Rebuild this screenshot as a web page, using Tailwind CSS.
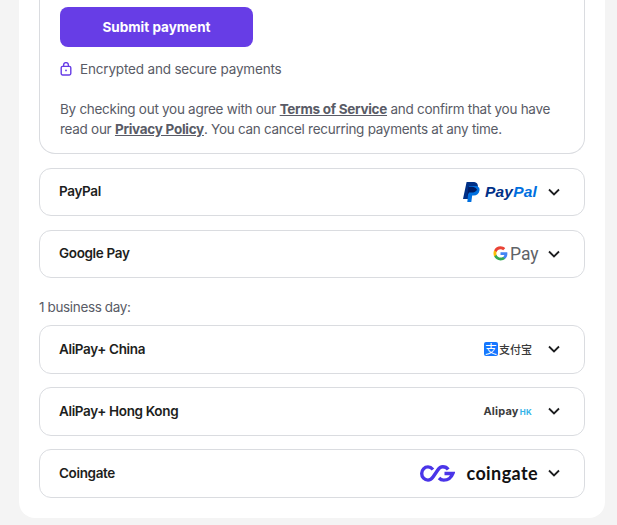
<!DOCTYPE html>
<html lang="en">
<head>
  <meta charset="UTF-8" />
  <title>Payment methods</title>
  <script src="https://cdn.jsdelivr.net/npm/@tailwindcss/browser@4"></script>
</head>
<body class="bg-[#f4f4f4] h-[525px] overflow-hidden font-['Inter',sans-serif] text-[#2f1c6a]">

  <!-- Main card -->
  <div class="ml-[19px] w-[586px] h-[518px] bg-white rounded-b-[16px] px-5 overflow-hidden">

    <!-- Card payment, expanded -->
    <div class="h-[154px] border border-t-0 border-[#dadce0] rounded-b-[16px] pl-5 pr-5 pt-[7px]">
      <button class="w-[193px] h-10 bg-[#673de6] rounded-lg text-white text-[13.5px] font-bold">Submit payment</button>
      <div class="flex items-center mt-[13px] h-[18px] text-[13.5px] tracking-[-0.17px] text-[#595b66]">
        <svg class="w-3 h-[14px] mr-[8px]" viewBox="0 0 12 14" fill="none" stroke="#673de6" stroke-width="1.4">
          <rect x="1.2" y="4.4" width="9.600" height="8.600" rx="1.4" />
          <path d="M3.600 4.400V3a2.400 2.400 0 0 1 4.800 0v1.400" />
          <circle cx="6" cy="8.400" r="0.900" fill="#673de6" stroke="none" />
        </svg>
        Encrypted and secure payments
      </div>
      <p class="mt-[21px] text-[13.5px] leading-5 tracking-[-0.28px] text-[#595b66] whitespace-nowrap">
        By checking out you agree with our <a href="#" class="font-bold underline">Terms of Service</a> and confirm that you have<br />
        read our <a href="#" class="font-bold underline">Privacy Policy</a>. You can cancel recurring payments at any time.
      </p>
    </div>

    <!-- PayPal -->
    <div class="flex items-center h-12 mt-[14px] pl-[19px] pr-6 pb-[1px] border border-[#dadce0] rounded-[12px]">
      <span class="text-[13.5px] tracking-[-0.35px] font-semibold text-[#1d1e20]">PayPal</span>
      <span class="ml-auto flex items-center">
        <svg class="w-[17px] h-5 mr-[5px]" viewBox="0 0 17 20">
          <path d="M3.600 0h6.200c3.600 0 5.600 1.900 5 5-.7 3.700-3.200 5.600-6.600 5.600H6L4.900 17H0z" fill="#003087" />
          <path d="M6 4h6.300c2.800 0 4.700 1.600 4.200 4.500-.6 3.200-2.800 5-5.700 5H9.200L8.300 20H4.300z" fill="#0070e0" />
          <path d="M6 10.600h2.400c2.400 0 4.500-1 5.700-2.900l-.2-.1C12.900 5.500 11 4.700 9 4.700H5.300L4.400 13.500z" fill="#001c64" />
        </svg>
        <span class="text-[15.5px] leading-5 font-['Liberation_Sans',sans-serif] font-bold italic tracking-[0.2px] text-[#003087]">Pay<span class="text-[#0070e0]">Pal</span></span>
      </span>
      <svg class="w-3 h-2 ml-[11px]" viewBox="0 0 12 8" fill="none" stroke="#1d1e20" stroke-width="1.800"><path d="M1 1.500l5 5 5-5" /></svg>
    </div>

    <!-- Google Pay -->
    <div class="flex items-center h-12 mt-[14px] pl-[19px] pr-6 pb-[1px] border border-[#dadce0] rounded-[12px]">
      <span class="text-[13.5px] tracking-[-0.35px] font-semibold text-[#1d1e20]">Google Pay</span>
      <span class="ml-auto flex items-center">
        <svg class="w-[15px] h-[15px] mr-[2px]" viewBox="0 0 48 48">
          <path fill="#4285f4" d="M46 24.500c0-1.600-.1-3.100-.4-4.500H24v8.500h12.400c-.5 2.900-2.100 5.300-4.500 6.900v5.700h7.300C43.500 36.700 46 31.100 46 24.500z" />
          <path fill="#34a853" d="M24 46c6.100 0 11.200-2 14.900-5.500l-7.300-5.700c-2 1.400-4.600 2.200-7.600 2.200-5.900 0-10.900-4-12.700-9.300H3.800v5.800C7.500 40.900 15.200 46 24 46z" />
          <path fill="#fbbc04" d="M11.300 27.700c-.5-1.400-.7-2.800-.7-4.200s.2-2.900.7-4.200v-5.800H3.800C2.300 16.500 1.500 19.900 1.500 23.500s.8 7 2.300 10z" />
          <path fill="#ea4335" d="M24 10c3.300 0 6.300 1.100 8.600 3.400l6.500-6.500C35.200 3.200 30.100 1 24 1 15.200 1 7.500 6.100 3.800 13.500l7.500 5.800C13.100 14 18.100 10 24 10z" />
        </svg>
        <span class="w-[27px] text-[17.5px] leading-5 font-['Roboto',sans-serif] text-[#5f6368]">Pay</span>
      </span>
      <svg class="w-3 h-2 ml-[11px]" viewBox="0 0 12 8" fill="none" stroke="#1d1e20" stroke-width="1.800"><path d="M1 1.500l5 5 5-5" /></svg>
    </div>

    <p class="mt-5 h-[27px] text-[13.5px] tracking-[-0.36px] leading-[18px] text-[#595b66]">1 business day:</p>

    <!-- AliPay+ China -->
    <div class="flex items-center h-[49px] pl-[19px] pr-6 pb-[1px] border border-[#dadce0] rounded-[12px]">
      <span class="text-[13.5px] tracking-[-0.35px] font-semibold text-[#1d1e20]">AliPay+ China</span>
      <span class="ml-auto flex items-center">
        <span class="flex items-center justify-center w-[14px] h-[14px] rounded-[2px] bg-[#1677ff] text-white text-[12px] leading-none font-['Noto_Sans_CJK_SC',sans-serif]">支</span>
        <span class="ml-[1px] text-[11px] leading-none font-['Noto_Sans_CJK_SC',sans-serif] font-medium text-[#3a3a3a]">支付宝</span>
      </span>
      <svg class="w-3 h-2 ml-[16px]" viewBox="0 0 12 8" fill="none" stroke="#1d1e20" stroke-width="1.800"><path d="M1 1.500l5 5 5-5" /></svg>
    </div>

    <!-- AliPay+ Hong Kong -->
    <div class="flex items-center h-[49px] mt-[13px] pl-[19px] pr-6 pb-[1px] border border-[#dadce0] rounded-[12px]">
      <span class="text-[13.5px] tracking-[-0.35px] font-semibold text-[#1d1e20]">AliPay+ Hong Kong</span>
      <span class="ml-auto flex items-baseline">
        <span class="text-[11px] font-bold tracking-[0.2px] text-[#3c3c3c]">Alipay</span>
        <span class="ml-[1px] text-[8px] font-bold tracking-[0.3px] text-[#35b3e8]">HK</span>
      </span>
      <svg class="w-3 h-2 ml-[16px]" viewBox="0 0 12 8" fill="none" stroke="#1d1e20" stroke-width="1.800"><path d="M1 1.500l5 5 5-5" /></svg>
    </div>

    <!-- Coingate -->
    <div class="flex items-center h-[49px] mt-[13px] pl-[19px] pr-6 pb-[1px] border border-[#dadce0] rounded-[12px]">
      <span class="text-[13.5px] tracking-[-0.35px] font-semibold text-[#1d1e20]">Coingate</span>
      <span class="ml-auto flex items-center">
        <svg class="w-[35px] h-[17px]" viewBox="0 0 35 17" fill="none" stroke="#4a35e8" stroke-width="3.400" stroke-linecap="butt">
          <path d="M13 4.500C11.500 2.800 10 1.900 8 1.900 4.500 1.900 1.700 4.800 1.700 8.500s2.800 6.600 6.300 6.600c2.300 0 3.800-1.300 5.200-3.300l4.600-6.800c1.300-2 2.800-3.200 5-3.200 2.400 0 4.200 1 5.400 2.700" />
          <path d="M19 13c1.300 1.400 2.700 2.100 4.700 2.100 4.300 0 7.400-1.900 9.200-6.600h-8.400" />
        </svg>
        <span class="ml-[11px] text-[18px] leading-5 font-bold tracking-[0.4px] text-[#111111] font-['Lato',sans-serif]">coingate</span>
      </span>
      <svg class="w-3 h-2 ml-[10px]" viewBox="0 0 12 8" fill="none" stroke="#1d1e20" stroke-width="1.800"><path d="M1 1.500l5 5 5-5" /></svg>
    </div>
  </div>
</body>
</html>
